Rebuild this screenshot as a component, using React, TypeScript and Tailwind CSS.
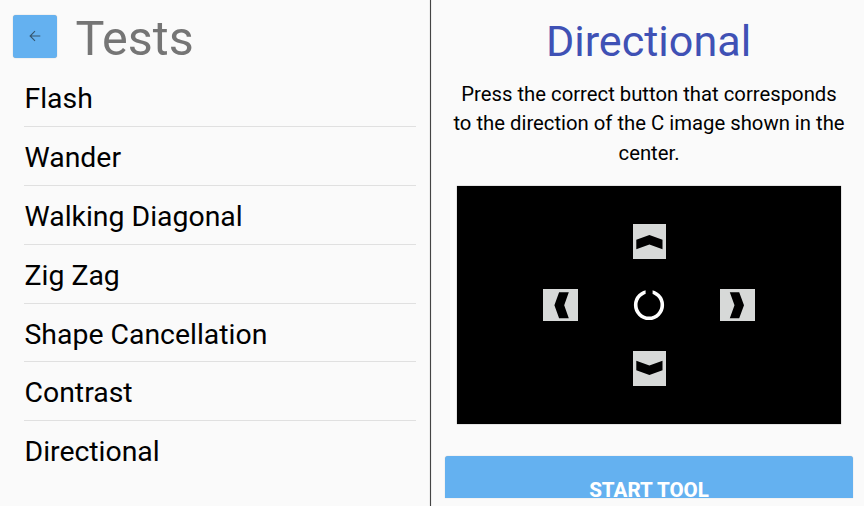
const tests = [
  'Flash',
  'Wander',
  'Walking Diagonal',
  'Zig Zag',
  'Shape Cancellation',
  'Contrast',
  'Directional',
];

function BackButton() {
  return (
    <button
      aria-label="Back"
      className="flex h-[43.5px] w-[43.5px] items-center justify-center rounded-[3px] bg-[#64b1f0] shadow-[0_0_1px_rgba(0,0,0,0.35)]"
    >
      <svg width="12" height="12" viewBox="0 0 12 12" fill="none" stroke="#35566f" strokeWidth="1.1">
        <path d="M11.3 6H1.2M6 1.1L1.1 6L6 10.9" />
      </svg>
    </button>
  );
}

function VerticalTile({ down = false }: { down?: boolean }) {
  return (
    <svg className="h-[35px] w-[33px]" viewBox="0 0 33 35">
      <rect width="33" height="35" fill="#d7d9d8" />
      <path
        d={down ? 'M3.3 9.8L16.4 14.6L29.5 9.8V19.2L16.4 24L3.3 19.2Z' : 'M3.3 15.8L16.4 11L29.5 15.8V25.2L16.4 20.6L3.3 25.2Z'}
        fill="#000"
      />
    </svg>
  );
}

function SideTile({ right = false }: { right?: boolean }) {
  return (
    <svg className="h-8 w-[35px]" viewBox="0 0 35 32">
      <rect width="35" height="32" fill="#d7d9d8" />
      <path
        d={right ? 'M9.8 3.2H19.2L24 16.3L19.2 29.2H9.8L14.5 16.3Z' : 'M16.1 3.2H25.8L21.2 16.3L25.8 29.2H16.1L11.4 16.3Z'}
        fill="#000"
      />
    </svg>
  );
}

function OpenRing() {
  return (
    <svg className="h-8 w-8" viewBox="0 0 32 32" fill="none">
      <circle cx="16" cy="16" r="13.3" stroke="#fff" strokeWidth="3.6" />
      <rect x="12.6" y="0" width="7" height="9" fill="#000" />
    </svg>
  );
}

export default function App() {
  return (
    <div className="flex h-[506px] w-[864px] overflow-hidden bg-[#fafafa] font-['Roboto',sans-serif] text-black">
      <section className="flex w-[430px] shrink-0 flex-col">
        <header className="flex h-[68px] items-start pl-[13px] pt-[14.5px]">
          <BackButton />
          <h1 className="-mt-[5px] ml-[19px] text-[48.5px] leading-[57px] text-[#757575]">Tests</h1>
        </header>
        <ul className="ml-[24px] mr-[14px]">
          {tests.map((name) => (
            <li
              key={name}
              className="flex h-[58.9px] items-center border-b border-[#e0e0e0] pl-[0.5px] pt-[4.4px] text-[28.4px] leading-none last:border-transparent"
            >
              {name}
            </li>
          ))}
        </ul>
      </section>
      <div className="w-px shrink-0 bg-[#444] shadow-[0_0_1px_rgba(0,0,0,0.5)]" />
      <section className="flex flex-1 flex-col">
        <h2 className="mt-[17px] pl-[2px] text-center text-[43.1px] leading-[50px] text-[#3f51b5]">Directional</h2>
        <p className="mt-[13.2px] pl-[3px] text-center text-[20.3px] leading-[29.3px]">
          Press the correct button that corresponds
          <br />
          to the direction of the C image shown in the
          <br />
          center.
        </p>
        <div className="ml-[26px] mt-[17.9px] flex h-[238px] w-[384px] flex-col items-center justify-between bg-black py-[38px] pl-px shadow-[0_0_1px_rgba(0,0,0,0.5)]">
          <VerticalTile />
          <div className="mr-px flex w-[212px] items-center justify-between">
            <SideTile />
            <OpenRing />
            <SideTile right />
          </div>
          <VerticalTile down />
        </div>
        <button className="ml-[13.5px] mt-[32px] flex h-[42.5px] w-[408px] items-start justify-center rounded-t-[3px] bg-[#64b1f0] pl-px pt-[24.5px] text-[20.5px] font-extrabold leading-[20px] text-white shadow-[0_0_1px_rgba(0,0,0,0.3)]">
          START TOOL
        </button>
      </section>
    </div>
  );
}
